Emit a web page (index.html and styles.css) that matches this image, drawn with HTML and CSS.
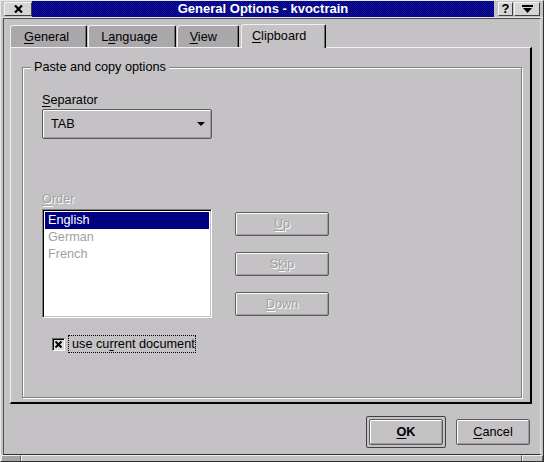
FILE: index.html
```html
<!DOCTYPE html>
<html>
<head>
<meta charset="utf-8">
<link rel="stylesheet" href="styles.css">
</head>
<body>
<div class="window">
  <div class="titlebar">
    <div class="tb-btn tb-close">
      <svg width="9" height="8" viewBox="0 0 9 8"><path d="M1 0.5 L8 7.5 M8 0.5 L1 7.5" stroke="#000" stroke-width="2.2" fill="none"/></svg>
    </div>
    <div class="title">General Options - kvoctrain</div>
    <div class="tb-btn tb-help">?</div>
    <div class="tb-btn tb-menu">
      <svg width="11" height="8" viewBox="0 0 11 8"><rect x="0" y="0" width="11" height="2" fill="#000"/><polygon points="1,3 10,3 5.5,8" fill="#000"/></svg>
    </div>
  </div>
  <div class="client">
    <div class="tabs">
      <div class="tab"><u>G</u>eneral</div>
      <div class="tab">L<u>a</u>nguage</div>
      <div class="tab tab-view"><u>V</u>iew</div>
      <div class="tab active"><u>C</u>lipboard</div>
    </div>
    <div class="panel">
      <div class="group">
        <div class="group-title">Paste and copy options</div>
        <div class="group-body">
          <div class="label label-sep"><u>S</u>eparator</div>
          <div class="combo">
            <span>TAB</span>
            <svg width="8" height="4" viewBox="0 0 8 4"><polygon points="0,0 8,0 4,4" fill="#000"/></svg>
          </div>
          <div class="label label-order disabled"><u>O</u>rder</div>
          <div class="order-row">
            <div class="listbox">
              <div class="item selected">English</div>
              <div class="item">German</div>
              <div class="item">French</div>
            </div>
            <div class="side-buttons">
              <div class="btn side-btn disabled"><u>U</u>p</div>
              <div class="btn side-btn disabled">S<u>k</u>ip</div>
              <div class="btn side-btn disabled"><u>D</u>own</div>
            </div>
          </div>
          <div class="check-row">
            <span class="checkbox">
              <svg width="7" height="7" viewBox="0 0 7 7"><path d="M0.5 0.5 L6.5 6.5 M6.5 0.5 L0.5 6.5" stroke="#000" stroke-width="2" fill="none"/></svg>
            </span>
            <span class="check-label">use cu<u>r</u>rent document</span>
          </div>
        </div>
      </div>
    </div>
    <div class="actions">
      <div class="default-frame"><div class="btn dlg-btn ok"><u>O</u>K</div></div>
      <div class="btn dlg-btn cancel"><u>C</u>ancel</div>
    </div>
  </div>
  <div class="grip">
    <span class="g-left"></span>
    <span class="g-mid"></span>
    <span class="g-right"></span>
  </div>
</div>
</body>
</html>
```

FILE: styles.css
```css
* { box-sizing: border-box; }

body {
  margin: 0;
  font-family: "Liberation Sans", Arial, sans-serif;
  font-size: 12.7px;
  color: #000;
  background: #c4c2c4;
}

u { text-decoration: underline; text-underline-offset: 2px; }

.window {
  width: 544px;
  height: 462px;
  display: flex;
  flex-direction: column;
  background: #c4c2c4;
  border: 1px solid;
  border-color: #e8e8e8 #303030 #303030 #e8e8e8;
}

/* title bar */
.titlebar {
  height: 17px;
  display: flex;
  align-items: center;
  padding: 0 3px 1px 3px;
  border-bottom: 1px solid #e4e4e4;
}

.tb-btn {
  height: 14px;
  display: flex;
  align-items: center;
  justify-content: center;
  background: #d6d4d6;
  border: 1px solid;
  border-color: #f4f4f4 #404040 #404040 #f4f4f4;
}

.tb-close { width: 28px; }

.title {
  flex: 1;
  height: 16px;
  margin-top: 1px;
  margin-right: 4px;
  background: repeating-conic-gradient(#00007a 0 25%, #10109c 0 50%) 0 0 / 2px 2px;
  color: #fff;
  font-weight: bold;
  font-size: 13px;
  line-height: 16px;
  text-align: center;
}

.tb-help {
  width: 15px;
  font-weight: bold;
  font-size: 13px;
  line-height: 12px;
}

.tb-menu { width: 26px; margin-left: 1px; }

/* client area */
.client {
  flex: 1;
  display: flex;
  flex-direction: column;
  margin: 0 2px;
  padding: 5px 8px 6px 6px;
  border: 1px solid;
  border-color: #505050 #e0e0e0 #303030 #505050;
}

.tabs {
  height: 23px;
  display: flex;
  align-items: flex-end;
}

.tab {
  height: 22px;
  padding: 4px 17px 0 12px;
  line-height: 14px;
  margin-right: 1px;
  background: #aaa8aa;
  border-left: 1px solid #f0f0f0;
  border-top: 1px solid #f0f0f0;
  border-right: 1px solid #000;
  border-radius: 3px 2px 0 0;
  box-shadow: inset -1px 0 0 #707070;
}

.tab:first-child { padding-left: 13px; }
.tab-view { padding-right: 21px; }

.tab.active {
  height: 24px;
  margin-bottom: -1px;
  margin-left: 1px;
  padding: 4px 19px 0 10px;
  background: #c4c2c4;
  position: relative;
  z-index: 1;
}

.panel {
  flex: 1;
  display: flex;
  flex-direction: column;
  padding: 19px 8px 4px 11px;
  border-top: 1px solid #f0f0f0;
  border-left: 1px solid #f0f0f0;
  border-right: 2px solid #000;
  border-bottom: 2px solid #000;
}

.group {
  flex: 1;
  width: 500px;
  border: 1px solid #808080;
  box-shadow: 1px 1px 0 #fff, inset 1px 1px 0 #fff;
}

.group-title {
  width: fit-content;
  margin: -8px 0 0 8px;
  padding: 0 3px;
  line-height: 14px;
  background: #c4c2c4;
}

.group-body {
  padding-left: 19px;
}

.label { line-height: 14px; }
.label-sep { margin-top: 19px; }
.label-order { margin-top: 53px; }

.disabled {
  color: #a2a0a2;
  text-shadow: 1px 1px 0 #fff;
}

.combo {
  width: 170px;
  height: 30px;
  margin-top: 2px;
  display: flex;
  align-items: center;
  justify-content: space-between;
  padding: 0 6px 1px 8px;
  border: 1px solid #5c5c5c;
  border-radius: 2px;
  box-shadow: inset 1px 1px 0 #fff, inset -1px -1px 0 #9c9a9c;
  line-height: 14px;
}

.order-row {
  display: flex;
  margin-top: 3px;
}

.listbox {
  width: 170px;
  height: 109px;
  background: #fff;
  padding: 2px;
  border: 1px solid;
  border-color: #808080 #fff #fff #808080;
  box-shadow: inset 1px 1px 0 #000, inset -1px -1px 0 #c4c2c4;
}

.item {
  height: 17px;
  line-height: 17px;
  padding-left: 3px;
  color: #a2a0a2;
}

.item.selected {
  background: #000080;
  color: #fff;
}

.side-buttons {
  display: flex;
  flex-direction: column;
  gap: 16px;
  margin-left: 23px;
  padding-top: 3px;
}

.btn {
  display: flex;
  align-items: center;
  justify-content: center;
  border: 1px solid #5c5c5c;
  border-radius: 2px;
  box-shadow: inset 1px 1px 0 #fff, inset -1px -1px 0 #9c9a9c;
  line-height: 14px;
}

.side-btn {
  width: 94px;
  height: 24px;
}

.check-row {
  display: flex;
  align-items: center;
  height: 18px;
  margin-top: 17px;
  padding-left: 10px;
}

.checkbox {
  width: 13px;
  height: 13px;
  display: flex;
  align-items: center;
  justify-content: center;
  background: #dcdcdc;
  border: 1px solid;
  border-color: #606060 #fff #fff #606060;
  box-shadow: inset 1px 1px 0 #000;
}

.check-label {
  margin-left: 3px;
  height: 18px;
  line-height: 16px;
  padding: 0 0 0 3px;
  border: 1px dotted #000;
}

.actions {
  height: 32px;
  margin-top: 12px;
  margin-right: 2px;
  display: flex;
  justify-content: flex-end;
  align-items: center;
}

.default-frame {
  padding: 2px;
  border: 1px solid #404040;
  border-radius: 2px;
}

.dlg-btn {
  width: 74px;
  height: 26px;
}

.ok { font-weight: bold; }
.cancel { margin-left: 10px; }

/* bottom resize grip */
.grip {
  height: 6px;
  display: flex;
}

.grip span {
  height: 6px;
  border-top: 1px solid #f0f0f0;
  border-left: 1px solid #f0f0f0;
  border-right: 1px solid #606060;
}

.g-left { width: 20px; background: #a4a2a4; }
.g-mid { flex: 1; }
.g-right { width: 21px; }
```
